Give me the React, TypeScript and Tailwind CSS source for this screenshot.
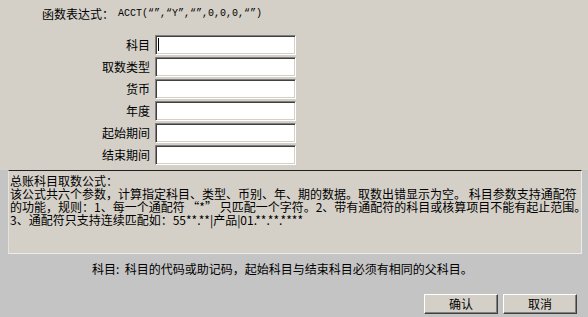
const fields = ['科目', '取数类型', '货币', '年度', '起始期间', '结束期间'];

const inputCls =
  'h-[20px] w-[141px] bg-white border border-t-[#808080] border-l-[#808080] border-r-white border-b-white shadow-[inset_1px_1px_0_#404040,inset_-1px_-1px_0_#d4d0c8]';

const btnCls =
  'h-[20px] w-[74px] bg-[#d4d0c8] text-[12px] text-black border border-t-white border-l-white border-r-[#404040] border-b-[#404040] shadow-[inset_-1px_-1px_0_#808080]';

const App = () => {
  return (
    <div
      className="w-[588px] h-[317px] overflow-hidden bg-[#c4c4c4] text-black"
      style={{ fontFamily: '"Noto Sans CJK SC", "Liberation Sans", sans-serif' }}>
      {/* top: formula + parameter fields */}
      <div className="h-[170px] bg-[#d4d0c8] pt-[7px]">
        <div className="flex items-center h-[14px] pl-[42px] text-[12px] leading-[14px]">
          <span>函数表达式：</span>
          <span className="ml-[4px] text-[10px] font-['Liberation_Mono',monospace]">
            ACCT(“”,“Y”,“”,0,0,0,“”)
          </span>
        </div>

        <div className="mt-[14px] flex flex-col gap-[2px]">
          {fields.map((f, i) => (
            <div key={f} className="flex items-center h-[20px]">
              <label className="w-[150px] text-right text-[12px] leading-[20px]">{f}</label>
              <div className={`ml-[5px] relative ${inputCls}`}>
                {i === 0 && (
                  <span className="absolute left-[2px] top-[2px] w-px h-[13px] bg-black" />
                )}
              </div>
            </div>
          ))}
        </div>
      </div>

      {/* description */}
      <div className="ml-[8px] w-[574px] h-[84px] bg-[#d4d0c8] border-t border-t-[#202020] border-r border-r-[#ececec] border-b border-b-[#ececec] border-l border-l-[#e4e2dc] pl-[1px] pt-[3px] text-[12px] leading-[13px] whitespace-nowrap">
        <div>总账科目取数公式：</div>
        <div>该公式共六个参数，计算指定科目、类型、币别、年、期的数据。取数出错显示为空。 科目参数支持通配符</div>
        <div>的功能，规则：1、每一个通配符 “*” 只匹配一个字符。2、带有通配符的科目或核算项目不能有起止范围。</div>
        <div>3、通配符只支持连续匹配如：55**.**|产品|01.**.**.****</div>
      </div>

      <div className="mt-[8px] pl-[92px] text-[12px] leading-[14px]">
        科目:&nbsp;&nbsp;科目的代码或助记码，起始科目与结束科目必须有相同的父科目。
      </div>

      <div className="mt-[18px] flex justify-end gap-[5px] pr-[11px]">
        <button className={btnCls}>确认</button>
        <button className={btnCls}>取消</button>
      </div>
    </div>
  );
};

export default App;
